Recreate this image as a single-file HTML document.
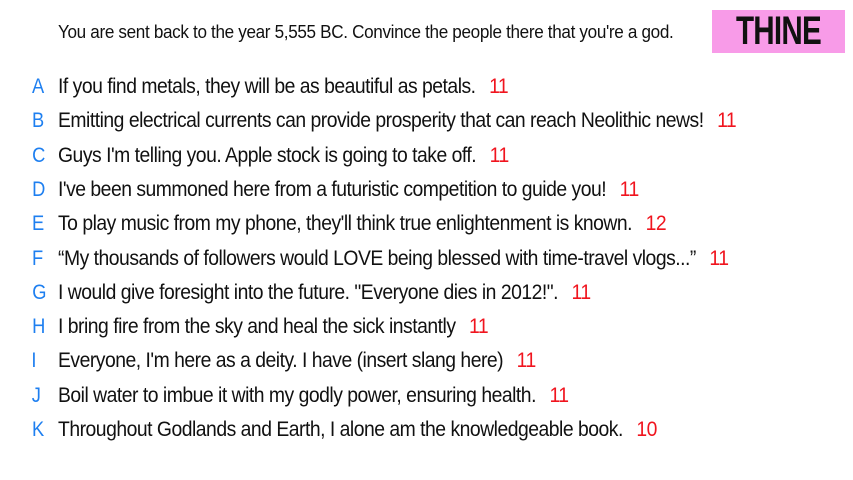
<!DOCTYPE html>
<html><head><meta charset="utf-8"><style>
body{margin:0;width:853px;height:480px;background:#fff;overflow:hidden;position:relative;font-family:"Liberation Sans",sans-serif;color:#111}
.h{position:absolute;left:58px;top:22px;font-size:18px;letter-spacing:-0.35px;white-space:nowrap;transform:scaleX(0.95);transform-origin:left}
.box{position:absolute;left:712px;top:10px;width:133px;height:43px;background:#f89be8;text-align:center;font-size:40px;line-height:43px;font-weight:bold;letter-spacing:-1px}
.box span{display:inline-block;transform:scaleX(0.74)}
.r{position:absolute;left:0;height:28px;font-size:21.5px;letter-spacing:-0.55px;white-space:nowrap;line-height:28px}
.l{position:absolute;left:31px;color:#1e7ff0;transform:scaleX(0.85)}
.t{position:absolute;left:58px;transform:scaleX(0.9);transform-origin:left}
.n{color:#f0141e;margin-left:15px}
</style></head><body>
<div class="h">You are sent back to the year 5,555 BC. Convince the people there that you're a god.</div>
<div class="box"><span>THINE</span></div>
<div class="r" style="top:72px"><span class="l">A</span><span class="t">If you find metals, they will be as beautiful as petals.<span class="n">11</span></span></div>
<div class="r" style="top:106px"><span class="l">B</span><span class="t">Emitting electrical currents can provide prosperity that can reach Neolithic news!<span class="n">11</span></span></div>
<div class="r" style="top:141px"><span class="l">C</span><span class="t">Guys I'm telling you. Apple stock is going to take off.<span class="n">11</span></span></div>
<div class="r" style="top:175px"><span class="l">D</span><span class="t">I've been summoned here from a futuristic competition to guide you!<span class="n">11</span></span></div>
<div class="r" style="top:209px"><span class="l">E</span><span class="t">To play music from my phone, they'll think true enlightenment is known.<span class="n">12</span></span></div>
<div class="r" style="top:244px"><span class="l">F</span><span class="t">“My thousands of followers would LOVE being blessed with time-travel vlogs...”<span class="n">11</span></span></div>
<div class="r" style="top:278px"><span class="l">G</span><span class="t">I would give foresight into the future. "Everyone dies in 2012!".<span class="n">11</span></span></div>
<div class="r" style="top:312px"><span class="l">H</span><span class="t">I bring fire from the sky and heal the sick instantly<span class="n">11</span></span></div>
<div class="r" style="top:346px"><span class="l">I</span><span class="t">Everyone, I'm here as a deity. I have (insert slang here)<span class="n">11</span></span></div>
<div class="r" style="top:381px"><span class="l">J</span><span class="t">Boil water to imbue it with my godly power, ensuring health.<span class="n">11</span></span></div>
<div class="r" style="top:415px"><span class="l">K</span><span class="t">Throughout Godlands and Earth, I alone am the knowledgeable book.<span class="n">10</span></span></div>
</body></html>
